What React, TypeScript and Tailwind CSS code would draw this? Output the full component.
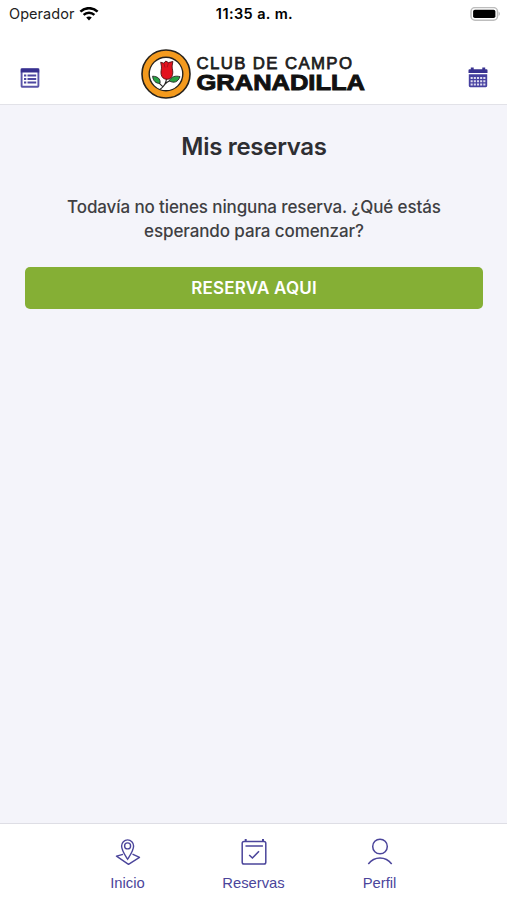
import type { ReactNode } from "react";

type Tab = {
  id: string;
  label: string;
  icon: ReactNode;
};

function WifiIcon() {
  return (
    <svg width="20" height="15" viewBox="0 0 20 15" fill="none">
      <path d="M1.4 4.6C6.2 0 13.8 0 18.6 4.6" stroke="#000" strokeWidth="2.5" />
      <path d="M4.6 7.9c3-2.9 7.8-2.9 10.8 0" stroke="#000" strokeWidth="2.4" />
      <path d="M7.2 10.5c1.6-1.5 4-1.5 5.6 0L10 13.5z" fill="#000" />
    </svg>
  );
}

function BatteryIcon() {
  return (
    <svg width="31" height="15" viewBox="0 0 31 15" fill="none">
      <rect x="1" y=".6" width="26.5" height="12.6" rx="4" stroke="#bdbdbd" strokeWidth="1.5" />
      <rect x="3.1" y="2.7" width="22.3" height="8.4" rx="1.8" fill="#000" />
      <path d="M28.7 4.8c1.5.7 1.5 3.5 0 4.2z" fill="#b3b3b3" />
    </svg>
  );
}

function ListIcon() {
  return (
    <svg width="20" height="20" viewBox="0 0 20 20" fill="none">
      <rect x="1.6" y="1.1" width="16.8" height="17.6" rx=".8" stroke="#5a54a8" strokeWidth="1.9" />
      <path d="M.8.5h18.4v4H.8z" fill="#38318f" />
      <path d="M4 7.5h2.3M4 11h2.3M4 14.5h2.3M7.5 7.5h8.7M7.5 11h8.7M7.5 14.5h8.7" stroke="#4d47a0" strokeWidth="1.9" />
    </svg>
  );
}

function CalendarIcon() {
  return (
    <svg width="20" height="21" viewBox="0 0 20 21" fill="none">
      <path d="M2.8 2.2V.6h2.9v1.6h8.6V.6h2.9v1.6h1.3q1 0 1 1v2.9H.5V3.2q0-1 1-1z" fill="#38318f" />
      <path d="M.8 7.3h18.4v11.5q0 1.4-1.4 1.4H2.2q-1.4 0-1.4-1.4z" fill="#4640a0" />
      <path
        d="M2.6 11h14.8M2.6 14.2h14.8M2.6 17.4h14.8"
        stroke="#dddbee"
        strokeWidth="2"
        strokeDasharray="2.1 1.075"
      />
    </svg>
  );
}

function Logo() {
  return (
    <svg width="226" height="52" viewBox="0 0 226 52" role="img" aria-label="Club de Campo Granadilla">
      <circle cx="25" cy="26" r="24" fill="#f39a1e" stroke="#25211c" strokeWidth="1.6" />
      <circle cx="25" cy="26" r="16.8" fill="#fff" stroke="#25211c" strokeWidth="1.4" />

      {/* stem and leaves */}
      <path
        d="M25.5 30.5c-.3 5-2.5 8-6.3 10.8M21.8 38.6l-4-3.8M23.8 36.4c1.5-1.800 3-2.800 5-3.600"
        fill="none"
        stroke="#222"
        strokeWidth="1.1"
      />
      <path d="M11.6 28.2c4.8.1 8.2 2.5 7.4 7.200-4.300.1-6.800-2.500-7.400-7.200z" fill="#27a243" stroke="#222" strokeWidth=".9" />
      <path d="M28.2 32.8c2-4.300 6.300-5.400 10.800-4.100-1.900 5.200-6 7-10.800 4.100z" fill="#27a243" stroke="#222" strokeWidth=".9" />

      {/* flower */}
      <path
        d="M19.7 14.2l3.2 1 1.9-2.2 2.6 1.6 4.5-1.1-.8 4.5c-.1 3 1.2 5.2.5 8.3-.6 3.2-2.6 5-5.6 5-3.3 0-5.3-2-5.9-5-.6-3.2.8-5.3.3-8.2z"
        fill="#e3121f"
        stroke="#4a1214"
        strokeWidth=".9"
      />
      <path d="M23 15.5l1 4M27.4 15l-1.2 4.3" stroke="#8d101a" strokeWidth=".7" />

      <text
        x="55.5"
        y="20.8"
        fontSize="16.8"
        textLength="155.5"
        fill="#1d1d1d"
        stroke="#1d1d1d"
        strokeWidth=".75"
        className="font-['Liberation_Sans',Arial,sans-serif]"
      >
        CLUB DE CAMPO
      </text>
      <text
        x="55.5"
        y="41.7"
        fontSize="21.5"
        textLength="168.5"
        lengthAdjust="spacingAndGlyphs"
        fill="#111"
        stroke="#111"
        strokeWidth=".9"
        className="font-['Liberation_Sans',Arial,sans-serif] font-bold"
      >
        GRANADILLA
      </text>
    </svg>
  );
}

function PinIcon() {
  return (
    <svg width="26" height="28" viewBox="0 0 26 28" fill="none" stroke="#4b459b" strokeWidth="1.4">
      <path d="M12.6 21.2C10 17 6.6 12.3 6.6 7.9a6 6 0 0 1 12 0c0 4.4-3.4 9.1-6 13.3z" />
      <circle cx="12.6" cy="7.9" r="3" />
      <path d="M8 16.300L1.500 18.200 13.500 26.300l11-7-7-3.200" strokeLinejoin="round" />
    </svg>
  );
}

function CheckCalendarIcon() {
  return (
    <svg width="26" height="28" viewBox="0 0 26 28" fill="none" stroke="#4b459b" strokeWidth="1.5">
      <rect x="1.2" y="3.5" width="23.6" height="22.5" rx="1.8" />
      <path d="M4.7 1v2.5M22 1v2.5" strokeWidth="2" />
      <path d="M4.5 8h17.4" />
      <path d="M8.2 17l3.2 3 6.6-6.7" strokeWidth="1.6" />
    </svg>
  );
}

function ProfileIcon() {
  return (
    <svg width="26" height="28" viewBox="0 0 26 28" fill="none" stroke="#4b459b" strokeWidth="1.5">
      <circle cx="13" cy="8.5" r="7.3" />
      <path d="M1.3 26C7.5 18 18.5 18 24.7 26" />
    </svg>
  );
}

const tabs: Tab[] = [
  { id: "inicio", label: "Inicio", icon: <PinIcon /> },
  { id: "reservas", label: "Reservas", icon: <CheckCalendarIcon /> },
  { id: "perfil", label: "Perfil", icon: <ProfileIcon /> },
];

function StatusBar() {
  return (
    <div className="grid h-7 grid-cols-[1fr_auto_1fr] items-center pl-[9px] pr-[6px] text-[14.5px] leading-none text-[#222]">
      <div className="flex items-center gap-[5px]">
        <span className="tracking-[0.05px]">Operador</span>
        <WifiIcon />
      </div>
      <span className="-ml-px font-semibold tracking-[0.4px] text-black">11:35 a. m.</span>
      <div className="flex justify-end">
        <BatteryIcon />
      </div>
    </div>
  );
}

export default function App() {
  return (
    <div className="flex h-[900px] w-[507px] flex-col overflow-hidden bg-[#f4f4fa] font-['Inter',sans-serif]">
      {/* ── Header ── */}
      <header className="h-[105px] shrink-0 border-b border-[#e2e2e8] bg-white">
        <StatusBar />
        <div className="flex justify-between pl-5 pr-[19px] pt-5">
          <button className="mt-5 h-5" aria-label="Menú">
            <ListIcon />
          </button>
          <Logo />
          <button className="mt-[19px] h-5" aria-label="Calendario">
            <CalendarIcon />
          </button>
        </div>
      </header>

      {/* ── Content ── */}
      <main className="flex-1 pl-[25px] pr-6 pt-[26px] text-center">
        <h1 className="text-[24px] font-semibold leading-8 tracking-[-0.3px] text-[#2e2e32]">Mis reservas</h1>
        <p className="mx-auto mt-8 w-[400px] text-[17px] font-medium leading-6 tracking-[-0.11px] text-[#3f3f43]">
          Todavía no tienes ninguna reserva. ¿Qué estás esperando para comenzar?
        </p>
        <button className="mt-6 h-[42px] w-full rounded-[5px] bg-[#85af35] pt-0.5 text-[17px] font-semibold tracking-[0.2px] text-white">
          RESERVA AQUI
        </button>
      </main>

      {/* ── Tab bar ── */}
      <nav className="flex h-[77px] shrink-0 justify-center border-t border-[#dedee5] bg-white">
        {tabs.map((tab) => (
          <button key={tab.id} className="flex w-[126px] flex-col items-center pt-[14px]">
            {tab.icon}
            <span className="mt-[7px] font-['Liberation_Sans',Arial,sans-serif] text-[14.8px] leading-5 text-[#4b459b]">
              {tab.label}
            </span>
          </button>
        ))}
      </nav>
    </div>
  );
}
